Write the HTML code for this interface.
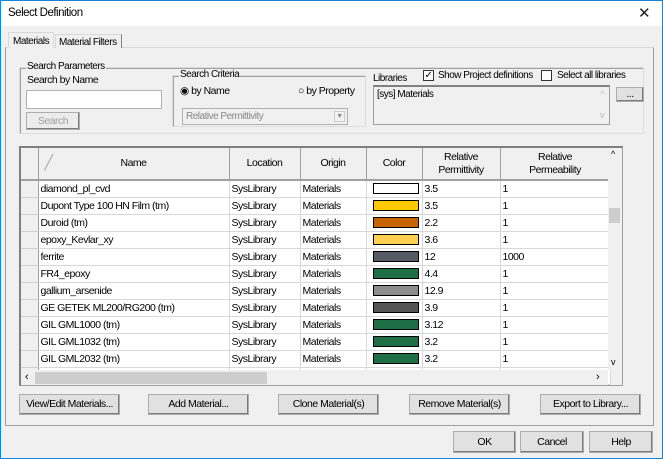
<!DOCTYPE html>
<html><head><meta charset="utf-8"><style>
*{box-sizing:border-box;margin:0;padding:0}
body{width:663px;height:459px;overflow:hidden;background:#f0f0f0;font-family:"Liberation Sans",sans-serif;font-size:10px;letter-spacing:-0.5px;color:#000;position:relative;white-space:nowrap}
.a{position:absolute}
.btn{position:absolute;background:#e1e1e1;border:1px solid #adadad;text-align:center;font-size:10.5px;box-shadow:inset -1px -1px 0 #7a7a7a}
.grp{position:absolute;border:1px solid #dcdcdc;box-shadow:inset 1px 1px 0 #a0a0a0}
.lg{position:absolute;background:#f0f0f0;padding:0 1px;top:-7px;left:6px;line-height:12px}
table{border-collapse:collapse;table-layout:fixed}
td{height:17px;border-right:1px solid #d8d8d8;border-bottom:1px solid #d8d8d8;padding:0 2px;white-space:nowrap;overflow:hidden;font-size:10.5px;background:#fff}
td.rh{background:#f0f0f0;border-right:1px solid #a0a0a0;border-bottom:1px solid #d0d0d0}
.sw{display:block;width:46px;height:11px;border:1px solid #000;margin-left:4px}
th{font-weight:normal;font-size:10.5px;background:#f0f0f0;border-right:1px solid #a0a0a0;border-bottom:2px solid #a0a0a0;height:32px;line-height:13px}
</style></head><body>
<div class="a" style="left:0;top:0;width:663px;height:459px;border:1px solid #1883d7"></div>
<div class="a" style="left:1px;top:1px;width:661px;height:25px;background:#fff"></div>
<div class="a" style="left:8px;top:7px;font-size:11.5px">Select Definition</div>
<div class="a" style="left:638px;top:4px;font-size:15px;color:#222;font-weight:normal">✕</div>
<!-- tabs -->
<div class="a" style="left:5px;top:47px;width:649px;height:379px;border:1px solid #a0a0a0;border-top-color:#d9d9d9;background:#f0f0f0"></div>
<div class="a" style="left:8px;top:32px;width:46px;height:16px;background:#f0f0f0;border:1px solid #d9d9d9;border-bottom:none;padding:3px 0 0 4px">Materials</div>
<div class="a" style="left:55px;top:34px;width:67px;height:14px;background:#f0f0f0;border:1px solid #d9d9d9;border-right-color:#808080;border-bottom:none;padding:2px 0 0 3px">Material Filters</div>
<!-- search params -->
<div class="grp" style="left:19px;top:67px;width:625px;height:67px"><div class="lg">Search Parameters</div></div>
<div class="a" style="left:27px;top:74px;font-size:10.5px">Search by Name</div>
<div class="a" style="left:26px;top:90px;width:136px;height:19px;background:#fff;border:1px solid #b0b0b0"></div>
<div class="btn" style="left:26px;top:112px;width:54px;height:18px;color:#a0a0a0;line-height:16px;background:#ececec">Search</div>
<div class="grp" style="left:172px;top:75px;width:194px;height:52px"><div class="lg">Search Criteria</div></div>
<div class="a" style="left:180px;top:85px;font-size:10.5px">◉ by Name</div>
<div class="a" style="left:298px;top:85px;font-size:10.5px">○ by Property</div>
<div class="a" style="left:182px;top:108px;width:166px;height:17px;border:1px solid #b0b0b0;background:#f0f0f0;color:#888;padding:2px 0 0 3px">Relative Permittivity<span class="a" style="right:2px;top:2px;width:11px;height:11px;border:1px solid #ccc;font-size:7px;text-align:center;line-height:10px">▼</span></div>
<div class="a" style="left:373px;top:73px">Libraries</div>
<div class="a" style="left:423px;top:70px;width:11px;height:11px;border:1px solid #333;background:#fff;font-size:10px;line-height:9px;text-align:center">✓</div>
<div class="a" style="left:438px;top:70px">Show Project definitions</div>
<div class="a" style="left:541px;top:70px;width:11px;height:11px;border:1px solid #333;background:#fff"></div>
<div class="a" style="left:557px;top:70px">Select all libraries</div>
<div class="a" style="left:373px;top:85px;width:237px;height:40px;border:1px solid #a0a0a0;border-top:2px solid #808080;background:#f0f0f0;padding:2px 3px">[sys] Materials<span class="a" style="right:5px;top:2px;color:#bbb;font-size:9px">^</span><span class="a" style="right:5px;top:23px;color:#bbb;font-size:9px">v</span></div>
<div class="btn" style="left:616px;top:87px;width:28px;height:15px;line-height:12px">...</div>
<!-- grid -->
<div class="a" style="left:19px;top:146px;width:604px;height:240px;border:1px solid #a0a0a0;border-top:2px solid #808080;border-left:2px solid #808080;background:#f0f0f0;overflow:hidden">
<table style="width:589px">
<colgroup><col style="width:17px"><col style="width:191px"><col style="width:71px"><col style="width:66px"><col style="width:56px"><col style="width:78px"><col style="width:110px"></colgroup>
<tr><th></th><th style="position:relative"><span style="position:absolute;left:6px;top:8px;color:#aaa;font-size:14px">╱</span>Name</th><th>Location</th><th>Origin</th><th>Color</th><th>Relative<br>Permittivity</th><th>Relative<br>Permeability</th></tr>
<tr><td class="rh"></td><td>diamond_pl_cvd</td><td>SysLibrary</td><td>Materials</td><td><span class="sw" style="background:#fff"></span></td><td>3.5</td><td>1</td></tr>
<tr><td class="rh"></td><td>Dupont Type 100 HN Film (tm)</td><td>SysLibrary</td><td>Materials</td><td><span class="sw" style="background:#ffc800"></span></td><td>3.5</td><td>1</td></tr>
<tr><td class="rh"></td><td>Duroid (tm)</td><td>SysLibrary</td><td>Materials</td><td><span class="sw" style="background:#c86400"></span></td><td>2.2</td><td>1</td></tr>
<tr><td class="rh"></td><td>epoxy_Kevlar_xy</td><td>SysLibrary</td><td>Materials</td><td><span class="sw" style="background:#ffd050"></span></td><td>3.6</td><td>1</td></tr>
<tr><td class="rh"></td><td>ferrite</td><td>SysLibrary</td><td>Materials</td><td><span class="sw" style="background:#555a64"></span></td><td>12</td><td>1000</td></tr>
<tr><td class="rh"></td><td>FR4_epoxy</td><td>SysLibrary</td><td>Materials</td><td><span class="sw" style="background:#1e6e46"></span></td><td>4.4</td><td>1</td></tr>
<tr><td class="rh"></td><td>gallium_arsenide</td><td>SysLibrary</td><td>Materials</td><td><span class="sw" style="background:#8c8c8c"></span></td><td>12.9</td><td>1</td></tr>
<tr><td class="rh"></td><td>GE GETEK ML200/RG200 (tm)</td><td>SysLibrary</td><td>Materials</td><td><span class="sw" style="background:#555"></span></td><td>3.9</td><td>1</td></tr>
<tr><td class="rh"></td><td>GIL GML1000 (tm)</td><td>SysLibrary</td><td>Materials</td><td><span class="sw" style="background:#1e6e46"></span></td><td>3.12</td><td>1</td></tr>
<tr><td class="rh"></td><td>GIL GML1032 (tm)</td><td>SysLibrary</td><td>Materials</td><td><span class="sw" style="background:#1e6e46"></span></td><td>3.2</td><td>1</td></tr>
<tr><td class="rh"></td><td>GIL GML2032 (tm)</td><td>SysLibrary</td><td>Materials</td><td><span class="sw" style="background:#1e6e46"></span></td><td>3.2</td><td>1</td></tr>
<tr><td class="rh"></td><td>GIL MC5 (tm)</td><td>SysLibrary</td><td>Materials</td><td><span class="sw" style="background:#555"></span></td><td>3.2</td><td>1</td></tr>
</table>
<div class="a" style="left:587px;top:0;width:13px;height:222px;background:#f0f0f0"><span class="a" style="left:3px;top:1px;font-size:9px">^</span><div class="a" style="left:1px;top:60px;width:11px;height:15px;background:#cdcdcd"></div><span class="a" style="left:3px;top:209px;font-size:9px">v</span></div>
<div class="a" style="left:0;top:222px;width:587px;height:16px;background:#f0f0f0"><span class="a" style="left:4px;top:1px;font-size:11px">‹</span><div class="a" style="left:14px;top:2px;width:232px;height:12px;background:#cdcdcd"></div><span class="a" style="left:575px;top:1px;font-size:11px">›</span></div>
</div>
<!-- action buttons -->
<div class="btn" style="left:19px;top:394px;width:101px;height:21px;line-height:19px">View/Edit Materials...</div>
<div class="btn" style="left:148px;top:394px;width:101px;height:21px;line-height:19px">Add Material...</div>
<div class="btn" style="left:278px;top:394px;width:101px;height:21px;line-height:19px">Clone Material(s)</div>
<div class="btn" style="left:409px;top:394px;width:101px;height:21px;line-height:19px">Remove Material(s)</div>
<div class="btn" style="left:540px;top:394px;width:101px;height:21px;line-height:19px">Export to Library...</div>
<div class="btn" style="left:453px;top:431px;width:63px;height:22px;line-height:20px">OK</div>
<div class="btn" style="left:520px;top:431px;width:64px;height:22px;line-height:20px">Cancel</div>
<div class="btn" style="left:589px;top:431px;width:64px;height:22px;line-height:20px">Help</div>
</body></html>
